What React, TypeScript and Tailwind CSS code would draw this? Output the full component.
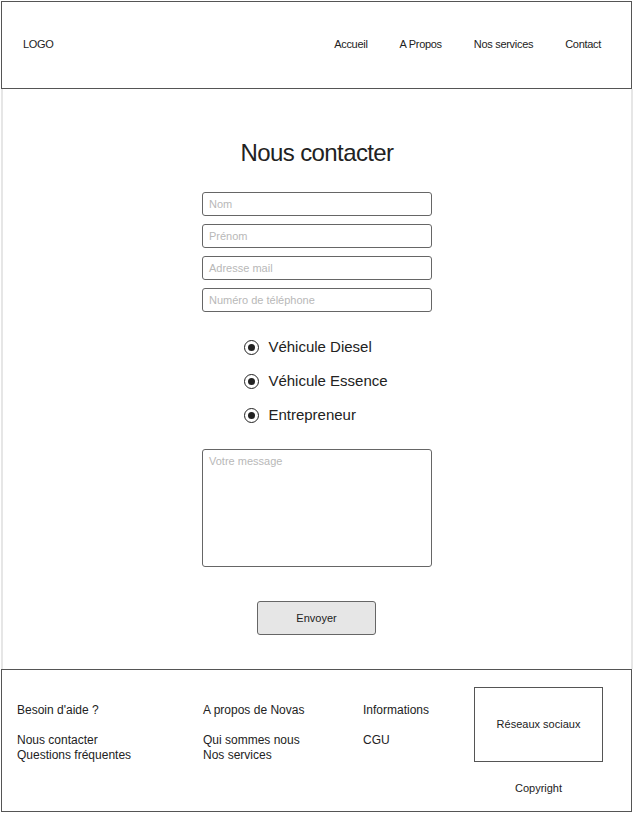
import React from "react";

const font = { fontFamily: '"Liberation Sans", Arial, sans-serif' } as React.CSSProperties;

function Radio({ label }: { label: string }) {
  return (
    <div className="flex items-center h-[20px]">
      <span className="w-[15px] h-[15px] rounded-full border-[1.5px] border-[#222] flex items-center justify-center">
        <span className="w-[7px] h-[7px] rounded-full bg-[#222]" />
      </span>
      <span className="ml-[9px] text-[15px] text-[#222] leading-[20px]">{label}</span>
    </div>
  );
}

function Field({ ph }: { ph: string }) {
  return (
    <div className="w-[230px] h-[24px] border border-[#666] rounded-[3px] flex items-center pl-[6px] text-[11px] text-[#b8b8b8]">
      {ph}
    </div>
  );
}

export default function App() {
  return (
    <div className="w-[633px] h-[813px] bg-white" style={font}>
      <header className="ml-px mt-px w-[631px] h-[88px] border border-[#555] flex items-center justify-between pl-[21px] pr-[30px] pb-[2px] text-[11px] text-[#222]">
        <span className="tracking-[-0.3px]">LOGO</span>
        <nav className="flex gap-[32px] tracking-[-0.3px]">
          <span>Accueil</span>
          <span>A Propos</span>
          <span>Nos services</span>
          <span>Contact</span>
        </nav>
      </header>
      <main className="ml-px w-[632px] h-[580px] border-x-2 border-[#e6e6e6] flex flex-col items-center">
        <h1 className="mt-[50px] text-[24px] leading-[28px] text-[#222] tracking-[-0.6px]">Nous contacter</h1>
        <div className="mt-[25px] flex flex-col gap-[8px]">
          <Field ph="Nom" />
          <Field ph="Prénom" />
          <Field ph="Adresse mail" />
          <Field ph="Numéro de téléphone" />
        </div>
        <div className="mt-[25px] flex flex-col gap-[14px] mr-[2px]">
          <Radio label="Véhicule Diesel" />
          <Radio label="Véhicule Essence" />
          <Radio label="Entrepreneur" />
        </div>
        <div className="mt-[24px] w-[230px] h-[118px] border border-[#666] rounded-[3px] pl-[6px] pt-[3px] text-[11px] text-[#b8b8b8]">
          Votre message
        </div>
        <button className="mt-[34px] -ml-[1px] w-[119px] h-[34px] bg-[#e6e6e6] border border-[#666] rounded-[3px] text-[11px] text-[#222]">
          Envoyer
        </button>
      </main>
      <footer className="ml-px w-[631px] h-[143px] border border-[#555] flex text-[12px] text-[#222] leading-[15px]">
        <div className="w-[201px] pl-[15px] pt-[33px]">
          <div>Besoin d'aide ?</div>
          <div className="mt-[15px]">Nous contacter</div>
          <div>Questions fréquentes</div>
        </div>
        <div className="w-[160px] pt-[33px]">
          <div>A propos de Novas</div>
          <div className="mt-[15px]">Qui sommes nous</div>
          <div>Nos services</div>
        </div>
        <div className="w-[111px] pt-[33px]">
          <div>Informations</div>
          <div className="mt-[15px]">CGU</div>
        </div>
        <div className="w-[129px] pt-[17px] flex flex-col items-center">
          <div className="w-[129px] h-[75px] border border-[#555] flex items-center justify-center text-[11px]">
            Réseaux sociaux
          </div>
          <div className="mt-[19px] text-[11px]">Copyright</div>
        </div>
      </footer>
    </div>
  );
}
